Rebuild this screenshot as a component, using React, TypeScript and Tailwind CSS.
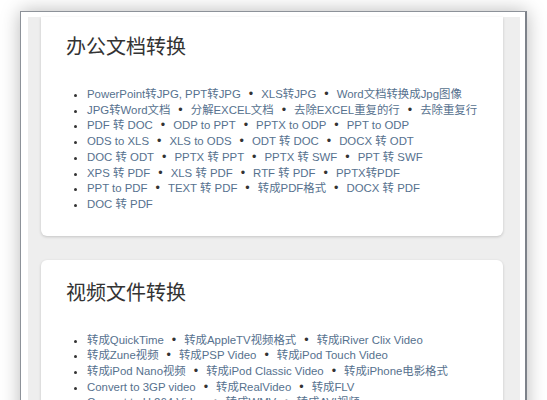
import React from 'react';

const office: string[][] = [
  ['PowerPoint转JPG, PPT转JPG', 'XLS转JPG', 'Word文档转换成Jpg图像'],
  ['JPG转Word文档', '分解EXCEL文档', '去除EXCEL重复的行', '去除重复行'],
  ['PDF 转 DOC', 'ODP to PPT', 'PPTX to ODP', 'PPT to ODP'],
  ['ODS to XLS', 'XLS to ODS', 'ODT 转 DOC', 'DOCX 转 ODT'],
  ['DOC 转 ODT', 'PPTX 转 PPT', 'PPTX 转 SWF', 'PPT 转 SWF'],
  ['XPS 转 PDF', 'XLS 转 PDF', 'RTF 转 PDF', 'PPTX转PDF'],
  ['PPT to PDF', 'TEXT 转 PDF', '转成PDF格式', 'DOCX 转 PDF'],
  ['DOC 转 PDF'],
];

const video: string[][] = [
  ['转成QuickTime', '转成AppleTV视频格式', '转成iRiver Clix Video'],
  ['转成Zune视频', '转成PSP Video', '转成iPod Touch Video'],
  ['转成iPod Nano视频', '转成iPod Classic Video', '转成iPhone电影格式'],
  ['Convert to 3GP video', '转成RealVideo', '转成FLV'],
  ['Convert to H.264 Video', '转成WMV', '转成AVI视频'],
];

function Section({ title, rows, first }: { title: string; rows: string[][]; first?: boolean }) {
  return (
    <div className={`bg-white shadow-[0_1px_3px_rgba(0,0,0,0.18)] pl-[25px] pr-4 ${first ? 'rounded-b-md pt-4 pb-[23px]' : 'rounded-md pt-[19px] pb-6'}`}>
      <h2 className="text-[20px] leading-[28px] text-[#333]">{title}</h2>
      <ul className="mt-[26px] list-disc pl-[21px] text-[11.4px] leading-[15.7px] text-[#56718e] marker:text-[#333]">
        {rows.map((row, i) => (
          <li key={i} className="whitespace-nowrap">
            {row.map((item, j) => (
              <span key={j}>
                {j > 0 && <span className="mx-[8px] text-[#333] text-[12.5px]">•</span>}
                <a className="cursor-pointer">{item}</a>
              </span>
            ))}
          </li>
        ))}
      </ul>
    </div>
  );
}

export default function App() {
  return (
    <div className="h-[400px] overflow-hidden bg-white pt-[11px] pl-[20px] font-['Liberation_Sans','Noto_Sans_CJK_SC',sans-serif]">
      <div className="w-[507px] h-[420px] bg-white border border-[#8d9299] border-r-2 border-r-[#7d828a] pt-[5px] pl-[7px] pr-[5px] shadow-[0_0_18px_rgba(0,0,0,0.28)]">
        <div className="h-full bg-[#eeeeee] pl-[13px] pr-[17px] flex flex-col gap-6">
          <Section title="办公文档转换" rows={office} first />
          <Section title="视频文件转换" rows={video} />
        </div>
      </div>
    </div>
  );
}
